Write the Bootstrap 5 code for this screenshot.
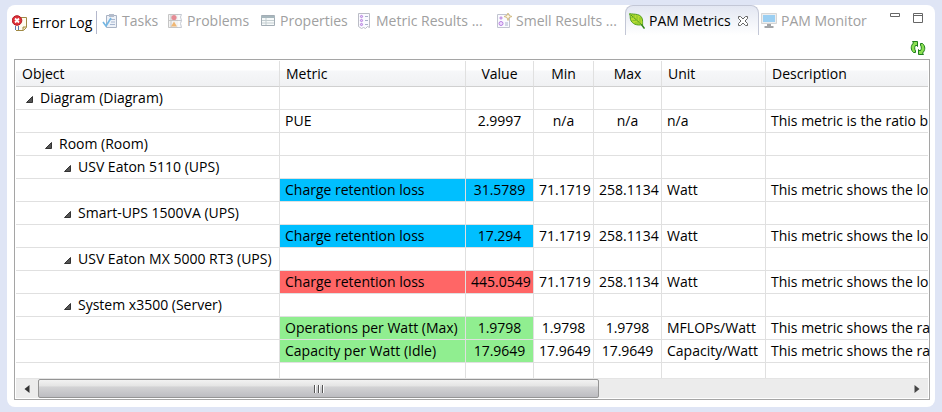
<!DOCTYPE html>
<html lang="en">
<head>
<meta charset="utf-8">
<meta name="viewport" content="width=device-width, initial-scale=1">
<title>PAM Metrics</title>
<link href="https://cdn.jsdelivr.net/npm/bootstrap@5.3.0/dist/css/bootstrap.min.css" rel="stylesheet">
<style>
body{background:#dfe5f5;font-family:"Open Sans","Noto Sans",sans-serif;font-size:14px;line-height:22px;color:#000;min-height:100vh;padding:5px 7px}
.view-panel{background:#fff;border-radius:8px;min-height:402px}
.view-tabs{display:grid;grid-template-columns:90px 65px 93px 98px 138px 134px 134px 1fr auto;height:30px}
.view-tab{border:0;background:none;color:#a0a0a0;padding:2px 0 0 5px;gap:4px;display:flex;align-items:center;white-space:nowrap;text-align:left;font-size:14px}
.view-tab svg{width:16px;height:16px;flex:none}
.tab-first{color:#000;border-right:1px solid #b4b8cc;height:23px;margin-top:6px;padding-top:0}
.tab-narrow-icon{gap:2px}
.tab-last{padding-left:2px}
.tab-active{color:#000;background:linear-gradient(#e3e7f2,#fff);border:1px solid #c3c7d6;border-bottom:0;border-radius:8px 8px 0 0;padding-left:3px;padding-top:1px}
.win-btn{border:0;background:none;padding:0;line-height:0}
.win-tools{gap:8px;padding:6px 10px 0 0}
.view-tools{height:24px;padding:2px 9px 0 0}
.tree-box{border:1px solid #a5a5a5;padding:1px;margin:0 5px 0 7px}
.metric-table{table-layout:fixed;width:100%;margin:0;border-collapse:separate;border-spacing:0}
.metric-table th,.metric-table td{border-right:1px solid #e0e0e0;border-bottom:1px solid #e0e0e0;height:23px;line-height:22px;padding:0 5px;font-weight:400;white-space:nowrap}
.metric-table th{height:26px;line-height:25px;padding:0 6px;background:linear-gradient(#fff 0,#fff 36%,#f6f7f9 40%,#f0f1f3 100%);border-bottom-color:#d0d0d0}
.metric-table tr>:last-child{border-right:0;padding-right:0}
.metric-table .num{text-align:center}
.metric-table .end-row td{height:15px;border-bottom:0}
.c-object{width:264px}.c-metric{width:186px}.c-wide{width:68px}.c-min{width:60px}.c-unit{width:104px}
.lv1{--level:8px}.lv2{--level:27px}.lv3{--level:46px}
.metric-table td.node{padding:0 0 0 var(--level)}
.twist{border:0;background:none;padding:0 0 0 1px;width:16px;line-height:0;display:inline-block;text-align:left;vertical-align:middle}
.bg-blue{background:#00bfff}.bg-red{background:#f66}.bg-green{background:#90ee90}
.scroll-bar{display:grid;grid-template-columns:22px 561px 1fr 22px;height:20px;background:#ececec;border-top:1px solid #e4e4e4}
.scroll-bar button{border:0;background:none;padding:0;line-height:0}
.scroll-bar .scroll-thumb{border:1px solid #949494;border-radius:2px;background:linear-gradient(#f2f2f2 0,#e4e4e4 36%,#d3d3d5 40%,#bdbdc1 100%)}
</style>
</head>
<body>
<main class="view-panel">
<div class="view-tabs" role="tablist">
<button class="view-tab tab-first" role="tab"><svg viewBox="0 0 16 16"><path d="M5 2.500h9.500v10l-3 3H4" fill="#fffdf0" stroke="#a08a45"/><path d="M11 15v-3h3.500" fill="#f5e6ae" stroke="#a08a45"/><path d="M3 12h1M6 12h1M3 14h1M6 14h1" stroke="#234b9b" stroke-width="1.500"/><circle cx="5" cy="5.500" r="4.800" fill="#df3038" stroke="#b51f28"/><path d="M3 3.500l4 4m0-4l-4 4" stroke="#fff" stroke-width="1.800"/></svg>Error Log</button>
<button class="view-tab" role="tab"><svg viewBox="0 0 16 16"><path d="M4.500 2.500h10v12h-10z" fill="#edf1f7" stroke="#a9b3c4"/><path d="M7 1h5v3H7z" fill="#b4bccb"/><path d="M9 6.500h4M9 9h4M8 11.500h5" stroke="#a8b7d0"/><path d="M1 9l3 4 5-8" fill="none" stroke="#72b6e4" stroke-width="1.600"/></svg>Tasks</button>
<button class="view-tab" role="tab"><svg viewBox="0 0 16 16"><path d="M1.500 1.500h10v13h-10zM1.500 7.500h10M4 1.500v13" fill="#f3f3f3" stroke="#c5c5c5"/><path d="M11 1.500h3.500l-1 2.500 1 3.500H11m0 0h3.500l-1 3 1 4H11" fill="#fafafa" stroke="#c5c9d2"/><circle cx="7" cy="4.500" r="2.600" fill="#e58b94"/><path d="M7 8.500l3 5H4z" fill="#efb775"/></svg>Problems</button>
<button class="view-tab" role="tab"><svg viewBox="0 0 16 16"><path d="M1.500 2.500h13v10h-13z" fill="#f7fafa" stroke="#a3adb5"/><path d="M1 3h14v2H1z" fill="#a7b7bd"/><path d="M2 7.500h12M2 10h12M6 5v7" stroke="#c3cdd0"/></svg>Properties</button>
<button class="view-tab tab-narrow-icon" role="tab"><svg viewBox="0 0 16 16"><path d="M.5.5h11v14l-2-1-2 2-2-1-2 1-3-2z" fill="#fafaff" stroke="#bbbdc6"/><g fill="#e6cbfa" stroke="#b680df"><circle cx="3.500" cy="3.500" r="1.100"/><circle cx="3.500" cy="7.500" r="1.100"/><circle cx="3.500" cy="11.500" r="1.100"/></g><path d="M7 3.500h3M7 7.500h3M7 11.500h3" stroke="#a9b2ca"/></svg>Metric Results ...</button>
<button class="view-tab" role="tab"><svg viewBox="0 0 16 16"><path d="M1.500 1.500h12v13h-12z" fill="#fafaff" stroke="#c1c4d0"/><g fill="#f0dcff" stroke="#b680df"><circle cx="5" cy="5" r="1.100"/><circle cx="5" cy="10.500" r="2"/></g><path d="M9 10h3M9 12h3" stroke="#a9b2ca"/><path d="M12 0l1 2.500 3 1-3 1-1 3-1-3-3-1 3-1z" fill="#fff9e6" stroke="#d3bd86"/></svg>Smell Results ...</button>
<div class="view-tab tab-active" role="tab" aria-selected="true"><svg viewBox="0 0 16 16"><path d="M.5.700c5 .8 12-.5 13 6.300.2 2 0 3 .2 4.500C8 13 3 11 1.500 6.500 1 4.500 1.500 3 .5.700z" fill="#b5dc31" stroke="#4d9c1b"/><path d="M2 2l11 10" fill="none" stroke="#4d9c1b"/><path d="M5 2v2.500H2.500M8 2.500v5H3.500M11 4v6H6" fill="none" stroke="#86bf2c"/><path d="M12.500 11.500l3 4" stroke="#328516" stroke-width="1.500"/></svg>PAM Metrics<button class="win-btn" aria-label="Close"><svg viewBox="0 0 16 16"><path d="M3.500 3.500h2L8 6l2.500-2.500h2v2L10 8l2.500 2.500v2h-2L8 10l-2.500 2.500h-2v-2L6 8 3.500 5.500z" fill="#fff" stroke="#666"/></svg></button></div>
<button class="view-tab tab-last" role="tab"><svg viewBox="0 0 16 16"><path d="M.5.5h15v10H.5z" fill="#eee" stroke="#d5d5d5"/><path d="M2 2h12v7H2z" fill="#9bcff2"/><path d="M6 11h4v2h2.500v2h-9v-2H6z" fill="#a3a5a8"/></svg>PAM Monitor</button>
<div class="d-flex align-items-start win-tools"><button class="win-btn" aria-label="Minimize"><svg width="14" height="14"><path d="M1.500 2.500h9v3h-9z" fill="#fff" stroke="#666"/></svg></button><button class="win-btn" aria-label="Maximize"><svg width="14" height="14"><path d="M2.500 2.500h9v9h-9zM2.500 4.500h9" fill="#fff" stroke="#666"/></svg></button></div>
</div>
<div class="d-flex justify-content-end align-items-center view-tools"><button class="win-btn" aria-label="Refresh"><svg width="16" height="16" viewBox="0 0 16 16"><g fill="#8be052" stroke="#1e7d1c"><path d="M2.500 1.500h5v5L6 5C4.500 6.500 4.200 8.500 5.500 11v1.500h-2C.5 10 .5 5.500 3.500 3z"/><path d="M13.500 14.500h-5v-5L10 11c1.500-1.500 1.800-3.500.5-6V3.500h2c3 2.500 3 7 0 9.500z"/></g></svg></button></div>
<div class="tree-box">
<table class="metric-table">
<colgroup><col class="c-object"><col class="c-metric"><col class="c-wide"><col class="c-min"><col class="c-wide"><col class="c-unit"><col></colgroup>
<thead><tr><th>Object</th><th>Metric</th><th class="num">Value</th><th class="num">Min</th><th class="num">Max</th><th>Unit</th><th>Description</th></tr></thead>
<tbody>
<tr><td class="node lv1"><button class="twist" aria-label="Collapse"><svg width="9" height="9"><path d="M7.500 1.500v6h-6z" fill="#555" stroke="#333"/></svg></button>Diagram (Diagram)</td><td></td><td></td><td></td><td></td><td></td><td></td></tr>
<tr><td></td><td>PUE</td><td class="num">2.9997</td><td class="num">n/a</td><td class="num">n/a</td><td>n/a</td><td>This metric is the ratio b</td></tr>
<tr><td class="node lv2"><button class="twist" aria-label="Collapse"><svg width="9" height="9"><path d="M7.500 1.500v6h-6z" fill="#555" stroke="#333"/></svg></button>Room (Room)</td><td></td><td></td><td></td><td></td><td></td><td></td></tr>
<tr><td class="node lv3"><button class="twist" aria-label="Collapse"><svg width="9" height="9"><path d="M7.500 1.500v6h-6z" fill="#555" stroke="#333"/></svg></button>USV Eaton 5110 (UPS)</td><td></td><td></td><td></td><td></td><td></td><td></td></tr>
<tr><td></td><td class="bg-blue">Charge retention loss</td><td class="num bg-blue">31.5789</td><td class="num">71.1719</td><td class="num">258.1134</td><td>Watt</td><td>This metric shows the lo</td></tr>
<tr><td class="node lv3"><button class="twist" aria-label="Collapse"><svg width="9" height="9"><path d="M7.500 1.500v6h-6z" fill="#555" stroke="#333"/></svg></button>Smart-UPS 1500VA (UPS)</td><td></td><td></td><td></td><td></td><td></td><td></td></tr>
<tr><td></td><td class="bg-blue">Charge retention loss</td><td class="num bg-blue">17.294</td><td class="num">71.1719</td><td class="num">258.1134</td><td>Watt</td><td>This metric shows the lo</td></tr>
<tr><td class="node lv3"><button class="twist" aria-label="Collapse"><svg width="9" height="9"><path d="M7.500 1.500v6h-6z" fill="#555" stroke="#333"/></svg></button>USV Eaton MX 5000 RT3 (UPS)</td><td></td><td></td><td></td><td></td><td></td><td></td></tr>
<tr><td></td><td class="bg-red">Charge retention loss</td><td class="num bg-red">445.0549</td><td class="num">71.1719</td><td class="num">258.1134</td><td>Watt</td><td>This metric shows the lo</td></tr>
<tr><td class="node lv3"><button class="twist" aria-label="Collapse"><svg width="9" height="9"><path d="M7.500 1.500v6h-6z" fill="#555" stroke="#333"/></svg></button>System x3500 (Server)</td><td></td><td></td><td></td><td></td><td></td><td></td></tr>
<tr><td></td><td class="bg-green">Operations per Watt (Max)</td><td class="num bg-green">1.9798</td><td class="num">1.9798</td><td class="num">1.9798</td><td>MFLOPs/Watt</td><td>This metric shows the ra</td></tr>
<tr><td></td><td class="bg-green">Capacity per Watt (Idle)</td><td class="num bg-green">17.9649</td><td class="num">17.9649</td><td class="num">17.9649</td><td>Capacity/Watt</td><td>This metric shows the ra</td></tr>
<tr class="end-row"><td></td><td></td><td></td><td></td><td></td><td></td><td></td></tr>
</tbody>
</table>
<div class="scroll-bar"><button aria-label="Scroll left"><svg width="8" height="10"><path d="M6.500 1v8l-5-4z" fill="#333"/></svg></button><button class="scroll-thumb" aria-label="Scroll"><svg width="12" height="10"><path d="M1.500 1v8M5.500 1v8M9.500 1v8" stroke="#555"/><path d="M2.500 1v8M6.500 1v8M10.500 1v8" stroke="#fff"/></svg></button><span></span><button aria-label="Scroll right"><svg width="8" height="10"><path d="M1.500 1v8l5-4z" fill="#444"/></svg></button></div>
</div>
</main>
<script src="https://cdn.jsdelivr.net/npm/bootstrap@5.3.0/dist/js/bootstrap.bundle.min.js"></script>
</body>
</html>
